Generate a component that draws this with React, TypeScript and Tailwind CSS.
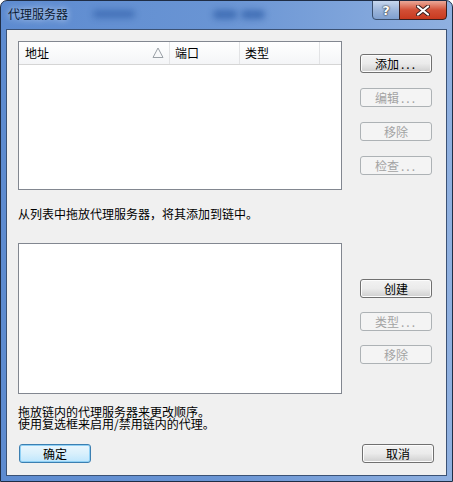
import React from "react"

const font = { fontFamily: '"Noto Sans CJK SC", "Noto Sans", sans-serif' }

function DlgButton({ label, dots, disabled, isDefault }: { label: string; dots?: boolean; disabled?: boolean; isDefault?: boolean }) {
  const base = "flex h-[19px] w-[72px] items-center justify-center rounded-[3px] border text-[12px] leading-none"
  const look = disabled
    ? "border-[#adb2b5] bg-[#f4f4f4] text-[#a3a3a3]"
    : isDefault
      ? "border-[#3c7fb1] bg-gradient-to-b from-[#eaf6fd] via-[#d9f0fc] to-[#bee6fd] text-black shadow-[inset_0_0_0_1px_#8fd0f5]"
      : "border-[#707070] bg-gradient-to-b from-[#f2f2f2] via-[#ebebeb] to-[#cfcfcf] text-black shadow-[inset_0_0_0_1px_#fcfcfc]"
  return (
    <div className={`${base} ${look}`}>
      <span>{label}</span>
      {dots && <span className="ml-[2px] tracking-[2px]">...</span>}
    </div>
  )
}

export default function App() {
  return (
    <div className="h-[482px] w-[453px] bg-white" style={font}>
      <div className="relative flex h-[482px] w-[453px] flex-col overflow-hidden rounded-t-[7px] border border-[#1f2d45] bg-gradient-to-r from-[#5d8bd0] via-[#6a95d4] to-[#8fb0e0]">
        {/* blurred glass blobs */}
        <div className="absolute left-[92px] top-[9px] h-[8px] w-[42px] rounded-full bg-[#2f5ea8] opacity-60 blur-[3px]" />
        <div className="absolute left-[212px] top-[9px] h-[9px] w-[24px] rounded-full bg-[#2f5ea8] opacity-70 blur-[3px]" />
        <div className="absolute left-[240px] top-[9px] h-[9px] w-[24px] rounded-full bg-[#2f5ea8] opacity-70 blur-[3px]" />

        {/* title bar */}
        <div className="relative flex h-[28px] shrink-0 items-start">
          <div className="pl-[7px] pt-[5px] text-[12px] leading-[16px] text-[#0b1a33] [text-shadow:0_0_6px_#e8f0fb]">代理服务器</div>
          <div className="ml-auto mr-[5px] flex h-[20px] -mt-px">
            <div className="flex w-[28px] items-center justify-center rounded-bl-[4px] border border-[#3a4f6e] bg-gradient-to-b from-[#c7d7ee] via-[#9db6db] to-[#7f9fcf]">
              <span className="text-[13px] font-bold leading-none text-white [text-shadow:0_0_1px_#222,0_0_2px_#222]" style={{ fontFamily: '"DejaVu Sans", sans-serif' }}>?</span>
            </div>
            <div className="-ml-px flex w-[48px] items-center justify-center rounded-br-[4px] border border-[#3a1f1f] bg-gradient-to-b from-[#eaa898] via-[#d24f36] to-[#c8391e]">
              <svg width="14" height="11" viewBox="0 0 14 11">
                <path d="M2 1.5 L12 9.5 M12 1.5 L2 9.5" stroke="#3a2020" strokeWidth="4" strokeLinecap="round" />
                <path d="M2 1.5 L12 9.5 M12 1.5 L2 9.5" stroke="#ffffff" strokeWidth="2.2" strokeLinecap="round" />
              </svg>
            </div>
          </div>
        </div>

        {/* client area */}
        <div className="mx-[5px] mb-[5px] flex-1 border border-[#3b5275] bg-[#f0f0f0] text-[12px] text-black">
          <div className="pl-[11px] pr-[13px] pt-[11px]">
            {/* upper section */}
            <div className="flex">
              <div className="h-[149px] w-[324px] border border-[#828790] bg-white">
                <div className="flex h-[23px] border-b border-[#d5d5d5] bg-gradient-to-b from-white to-[#f4f5f7] leading-[22px]">
                  <div className="relative w-[151px] border-r border-[#e2e3e5] pl-[6px]">
                    地址
                    <svg className="absolute left-[133px] top-[5px]" width="12" height="11" viewBox="0 0 12 11">
                      <path d="M1 10.5 L6 1 L11 10.5 Z" fill="none" stroke="#9aa0a6" strokeWidth="1" />
                    </svg>
                  </div>
                  <div className="w-[70px] border-r border-[#e2e3e5] pl-[5px]">端口</div>
                  <div className="w-[80px] border-r border-[#e2e3e5] pl-[5px]">类型</div>
                </div>
              </div>
              <div className="ml-[18px] mt-[13px] flex flex-col gap-[15px]">
                <DlgButton label="添加" dots />
                <DlgButton label="编辑" dots disabled />
                <DlgButton label="移除" disabled />
                <DlgButton label="检查" dots disabled />
              </div>
            </div>

            <div className="mt-[17px] leading-[14px]">从列表中拖放代理服务器，将其添加到链中。</div>

            {/* lower section */}
            <div className="mt-[22px] flex">
              <div className="h-[151px] w-[324px] border border-[#828790] bg-white" />
              <div className="ml-[18px] mt-[36px] flex flex-col gap-[14px]">
                <DlgButton label="创建" />
                <DlgButton label="类型" dots disabled />
                <DlgButton label="移除" disabled />
              </div>
            </div>

            <p className="mt-[12px] leading-[12px]">
              拖放链内的代理服务器来更改顺序。
              <br />
              使用复选框来启用/禁用链内的代理。
            </p>

            <div className="mt-[14px] flex justify-between">
              <div className="ml-px">
                <DlgButton label="确定" isDefault />
              </div>
              <div className="-mr-px">
                <DlgButton label="取消" />
              </div>
            </div>
          </div>
        </div>
      </div>
    </div>
  )
}
